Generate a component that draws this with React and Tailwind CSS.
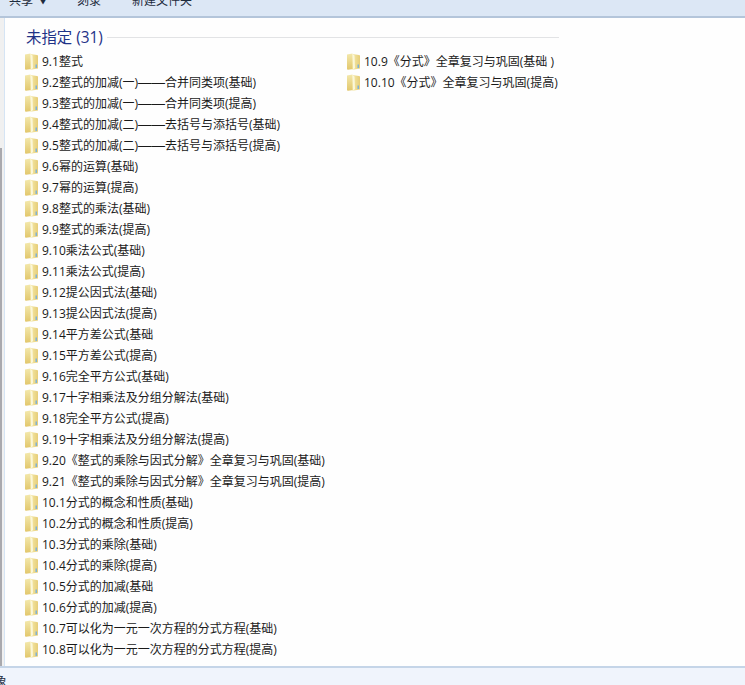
const FONT = '"Open Sans", "Noto Sans CJK SC", sans-serif';

const leftItems = [
  '9.1整式',
  '9.2整式的加减(一)——合并同类项(基础)',
  '9.3整式的加减(一)——合并同类项(提高)',
  '9.4整式的加减(二)——去括号与添括号(基础)',
  '9.5整式的加减(二)——去括号与添括号(提高)',
  '9.6幂的运算(基础)',
  '9.7幂的运算(提高)',
  '9.8整式的乘法(基础)',
  '9.9整式的乘法(提高)',
  '9.10乘法公式(基础)',
  '9.11乘法公式(提高)',
  '9.12提公因式法(基础)',
  '9.13提公因式法(提高)',
  '9.14平方差公式(基础',
  '9.15平方差公式(提高)',
  '9.16完全平方公式(基础)',
  '9.17十字相乘法及分组分解法(基础)',
  '9.18完全平方公式(提高)',
  '9.19十字相乘法及分组分解法(提高)',
  '9.20《整式的乘除与因式分解》全章复习与巩固(基础)',
  '9.21《整式的乘除与因式分解》全章复习与巩固(提高)',
  '10.1分式的概念和性质(基础)',
  '10.2分式的概念和性质(提高)',
  '10.3分式的乘除(基础)',
  '10.4分式的乘除(提高)',
  '10.5分式的加减(基础',
  '10.6分式的加减(提高)',
  '10.7可以化为一元一次方程的分式方程(基础)',
  '10.8可以化为一元一次方程的分式方程(提高)',
];

const rightItems = ['10.9《分式》全章复习与巩固(基础 )', '10.10《分式》全章复习与巩固(提高)'];

const FolderIcon = () => (
  <svg width="13" height="17" viewBox="0 0 13 17" className="shrink-0">
    <defs>
      <linearGradient id="fb" x1="0" y1="0" x2="0" y2="1">
        <stop offset="0" stopColor="#f3e8ac" />
        <stop offset="1" stopColor="#e2c76c" />
      </linearGradient>
      <linearGradient id="ff" x1="0" y1="0" x2="1" y2="0">
        <stop offset="0" stopColor="#f5e9a8" />
        <stop offset="1" stopColor="#e6cd78" />
      </linearGradient>
    </defs>
    <path d="M0 1.5 L5.5 0.5 L6.5 16 L1 16.8 Q0 16.8 0 16 Z" fill="url(#fb)" />
    <path d="M5.5 1 L12 2 Q13 2 13 3 L13 15.5 L5.5 16.8 Z" fill="url(#ff)" />
    <path d="M5.5 1 L7.5 2.5 L8 15 L6 16.8 Z" fill="#fbf7da" />
    <rect x="10.5" y="11.5" width="1.5" height="3.5" fill="#7fb2d8" />
  </svg>
);

const Row = ({ label }) => {
  const parts = label.split('——');
  return (
    <div className="flex items-center h-[21px] gap-[4px] whitespace-nowrap text-[12px] text-[#1a1a1a]">
      <FolderIcon />
      <span>
        {parts[0]}
        {parts.length > 1 && (
          <>
            <span className="font-['Liberation_Sans'] text-[13.5px] leading-[0]">——</span>
            {parts[1]}
          </>
        )}
      </span>
    </div>
  );
};

export default function App() {
  return (
    <div className="flex flex-col w-[745px] h-[685px] overflow-hidden bg-white" style={{ fontFamily: FONT }}>
      {/* toolbar, cut off at the top of the shot */}
      <div className="flex items-end shrink-0 h-[18px] pl-[9px] bg-[#dce7f5] border-b-2 border-[#b4c5da] text-[12px] text-[#1e2b3c] overflow-hidden">
        <div className="flex items-center h-[20px] mb-[5px] whitespace-nowrap">
          <span>共享</span>
          <span className="ml-[6px] text-[8px]">▼</span>
          <span className="ml-[30px]">刻录</span>
          <span className="ml-[31px]">新建文件夹</span>
        </div>
      </div>

      <div className="flex flex-1 min-h-0">
        {/* scrollbar sliver */}
        <div className="flex flex-col shrink-0 w-[5px] bg-[#f0f0f0] border-r border-[#d5e4f4]">
          <div className="h-[130px]" />
          <div className="w-[2px] flex-1 bg-[#a9a9ae]" />
        </div>

        <div className="flex-1 pl-[20px] pt-[9px] bg-[#fefefe]">
          <div className="flex items-center w-[534px] h-[20px]">
            <span className="ml-[1px] mt-[2px] text-[15.4px] text-[#1e3287] whitespace-nowrap">未指定 (31)</span>
            <div className="flex-1 h-px ml-[4px] bg-[#e2e3e5]" />
          </div>
          <div className="flex mt-[4px]">
            <div className="flex flex-col w-[322px]">
              {leftItems.map((item) => <Row key={item} label={item} />)}
            </div>
            <div className="flex flex-col">
              {rightItems.map((item) => <Row key={item} label={item} />)}
            </div>
          </div>
        </div>
      </div>

      {/* status bar */}
      <div className="shrink-0 h-[19px] bg-[#f0f4fc] border-t-2 border-[#c5d5e8] text-[12px] text-[#1e2b3c] overflow-hidden">
        <div className="ml-[-5px] mt-[6px] leading-[16px]">象</div>
      </div>
    </div>
  );
}
